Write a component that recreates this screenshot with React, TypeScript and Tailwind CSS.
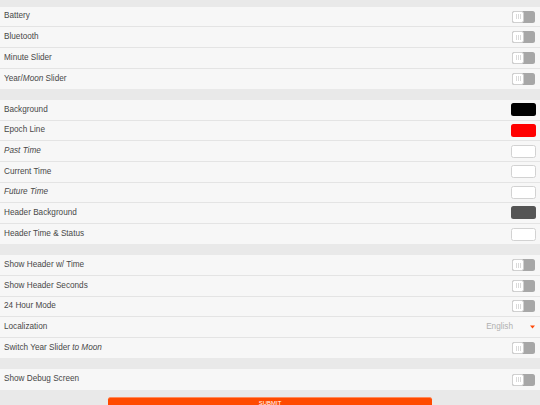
import React from "react";

type Row =
  | { kind: "toggle"; label: React.ReactNode }
  | { kind: "color"; label: React.ReactNode; color: string; bordered?: boolean }
  | { kind: "select"; label: React.ReactNode; value: string };

const Toggle = () => (
  <div className="flex h-[12px] w-[23px] rounded-[2.5px] bg-[#a7a7a7]">
    <div className="flex h-full w-[12px] items-center justify-center gap-[1px] rounded-[2.5px] border border-[#d0d0d0] bg-white">
      <span className="h-[5px] w-px bg-[#dadada]" />
      <span className="h-[5px] w-px bg-[#dadada]" />
      <span className="h-[5px] w-px bg-[#dadada]" />
    </div>
  </div>
);

const Swatch = ({ color, bordered }: { color: string; bordered?: boolean }) => (
  <div
    className={
      bordered
        ? "h-[13px] w-[25px] rounded-[2.5px] border border-[#d2d2d2]"
        : "h-[13px] w-[25px] rounded-[2.5px]"
    }
    style={{ backgroundColor: color }}
  />
);

const groups: Row[][] = [
  [
    { kind: "toggle", label: "Battery" },
    { kind: "toggle", label: "Bluetooth" },
    { kind: "toggle", label: "Minute Slider" },
    {
      kind: "toggle",
      label: (
        <>
          Year/<i>Moon</i> Slider
        </>
      ),
    },
  ],
  [
    { kind: "color", label: "Background", color: "#000000" },
    { kind: "color", label: "Epoch Line", color: "#ff0000" },
    { kind: "color", label: <i>Past Time</i>, color: "#ffffff", bordered: true },
    { kind: "color", label: "Current Time", color: "#ffffff", bordered: true },
    { kind: "color", label: <i>Future Time</i>, color: "#ffffff", bordered: true },
    { kind: "color", label: "Header Background", color: "#555555" },
    { kind: "color", label: "Header Time & Status", color: "#ffffff", bordered: true },
  ],
  [
    { kind: "toggle", label: "Show Header w/ Time" },
    { kind: "toggle", label: "Show Header Seconds" },
    { kind: "toggle", label: "24 Hour Mode" },
    { kind: "select", label: "Localization", value: "English" },
    {
      kind: "toggle",
      label: (
        <>
          Switch Year Slider <i>to Moon</i>
        </>
      ),
    },
  ],
  [{ kind: "toggle", label: "Show Debug Screen" }],
];

export default function App() {
  return (
    <div
      className="h-[405px] w-[540px] overflow-hidden bg-[#e9e9e9] pt-[6.8px]"
      style={{ fontFamily: '"Liberation Sans", Arial, sans-serif' }}
    >
      <div className="flex flex-col gap-[11px]">
        {groups.map((g, gi) => (
          <div key={gi} className="flex flex-col bg-[#f7f7f7]">
            {g.map((r, ri) => (
              <div
                key={ri}
                className={
                  ri < g.length - 1
                    ? "box-border flex h-[20.6px] items-center justify-between border-b border-[#e4e4e4] pl-[4px] pr-[5px]"
                    : "box-border flex h-[20.6px] items-center justify-between pl-[4px] pr-[5px]"
                }
              >
                <span className="text-[8.2px] leading-none text-[#484848]">{r.label}</span>
                {r.kind === "toggle" && <Toggle />}
                {r.kind === "color" && (
                  <div className="-mr-[1px]">
                    <Swatch color={r.color} bordered={r.bordered} />
                  </div>
                )}
                {r.kind === "select" && (
                  <div className="flex items-center gap-[17px]">
                    <span className="text-[8.2px] leading-none text-[#b0b0b0]">{r.value}</span>
                    <svg width="5" height="4" viewBox="0 0 5 4">
                      <polygon points="0,0.5 5,0.5 2.5,3.5" fill="#ff4a0a" />
                    </svg>
                  </div>
                )}
              </div>
            ))}
          </div>
        ))}
      </div>
      <div className="mt-[7px] flex justify-center">
        <div className="flex h-[24px] w-[324px] justify-center rounded-[2.5px] border-t border-[#ff8a5a] bg-[#ff4a00] pt-[2.5px]">
          <span className="text-[6px] leading-none text-white">SUBMIT</span>
        </div>
      </div>
    </div>
  );
}
